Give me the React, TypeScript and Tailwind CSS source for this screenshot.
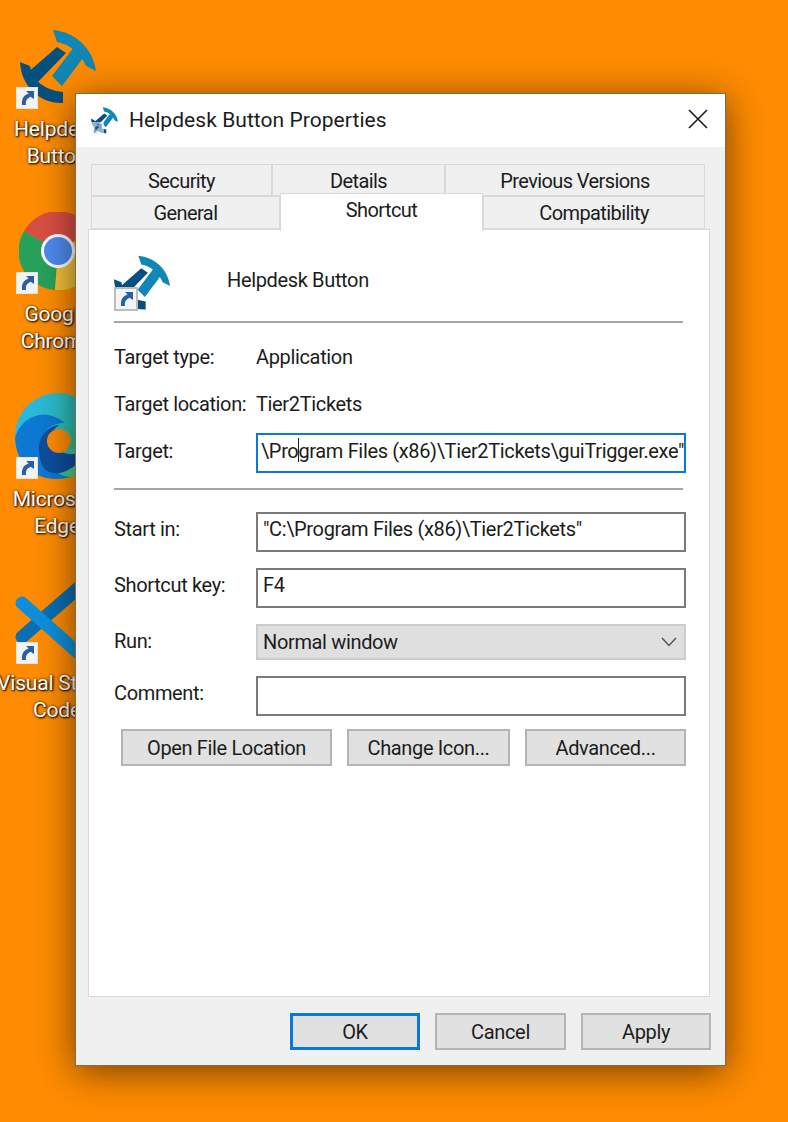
import { type ReactNode } from 'react'

function HelpdeskLogo({ className }: { className: string }) {
  return (
    <svg viewBox="0 0 76 74" className={className}>
      <path d="M33 0C55 2 73 18 76 41L66 36C62 25 50 14 37 12Z" fill="#1286b4" />
      <path d="M54 17L63 28L42 56L32 46Z" fill="#1286b4" />
      <path d="M37 17L46 23L16 54L6 44Z" fill="#06507f" />
      <path d="M0 32L10 36C12 50 24 60 43 62L43 73C20 74 1 56 0 32Z" fill="#06507f" />
    </svg>
  )
}

function ShortcutBadge({ className }: { className: string }) {
  return (
    <div className={`absolute flex items-center justify-center bg-[#f4f4f4] ${className}`}>
      <svg viewBox="0 0 16 16" className="size-[80%]">
        <path d="M15 1H7l2.6 2.6C5 5 2.5 8.5 3 15h4c-.5-4 .6-6.6 4.6-8.3L15 9Z" fill="#2a5fa8" />
      </svg>
    </div>
  )
}

function ChromeIcon() {
  return (
    <svg viewBox="0 0 78 78" className="size-[78px]">
      <path d="M39 39L5 19A39 39 0 0 1 73 19Z" fill="#db4f43" />
      <path d="M39 39L5 19A39 39 0 0 0 36 78Z" fill="#27a25b" />
      <path d="M39 39L73 19A39 39 0 0 1 36 78Z" fill="#f2c13c" />
      <circle cx="39" cy="39" r="17" fill="#fff" />
      <circle cx="39" cy="39" r="14" fill="#4f8bf0" />
    </svg>
  )
}

function EdgeIcon() {
  return (
    <svg viewBox="0 0 86 86" className="size-[86px]">
      <defs>
        <linearGradient id="edgeTop" x1="0" y1="0" x2="1" y2="0.4">
          <stop offset="0" stopColor="#2ab6ef" />
          <stop offset="0.7" stopColor="#2cc0b4" />
          <stop offset="1" stopColor="#5fd66e" />
        </linearGradient>
      </defs>
      <circle cx="43" cy="43" r="43" fill="url(#edgeTop)" />
      <path d="M0 46C4 26 28 12 50 30C34 30 24 40 28 56C31 72 44 84 56 84C24 92 2 74 0 46Z" fill="#0c79d4" />
      <path d="M24 56C24 40 36 32 44 32C36 38 34 46 40 54C46 62 58 62 70 60C60 78 40 86 30 76C26 72 24 64 24 56Z" fill="#0d4f9e" />
      <circle cx="44" cy="48" r="12" fill="#ff8c00" />
      <path d="M50 34C58 38 60 48 52 56L70 56C72 46 62 34 50 34Z" fill="#2cc0a0" />
    </svg>
  )
}

function VsCodeIcon() {
  return (
    <svg viewBox="0 0 86 86" className="size-[86px]">
      <path d="M8 57L70 3" stroke="#0a6fb3" strokeWidth="13" strokeLinecap="round" />
      <path d="M8 23L70 78" stroke="#0f8fdb" strokeWidth="13" strokeLinecap="round" />
    </svg>
  )
}

const desktopItems = [
  { lines: ['Helpdesk', 'Button'], icon: <HelpdeskLogo className="h-[74px] w-[76px]" />, iconPos: 'left-[20px] top-[30px]', badge: 'top-[87px]', label: 'top-[116px]' },
  { lines: ['Google', 'Chrome'], icon: <ChromeIcon />, iconPos: 'left-[19px] top-[212px]', badge: 'top-[272px]', label: 'top-[301px]' },
  { lines: ['Microsoft', 'Edge'], icon: <EdgeIcon />, iconPos: 'left-[15px] top-[393px]', badge: 'top-[457px]', label: 'top-[486px]' },
  { lines: ['Visual Studio', 'Code'], icon: <VsCodeIcon />, iconPos: 'left-[14px] top-[580px]', badge: 'top-[642px]', label: 'top-[670px]' },
]

function TabButton({ label, width, active }: { label: string; width: string; active?: boolean }) {
  return (
    <div
      className={
        active
          ? `relative z-10 -mb-[2px] -mt-[3px] flex h-[38px] items-center justify-center border border-b-0 border-[#d9d9d9] bg-white tracking-[-0.6px] ${width}`
          : `flex h-full items-center justify-center border border-[#d9d9d9] bg-[#f0f0f0] pt-[2px] tracking-[-0.6px] ${width}`
      }
    >
      <span className={active ? 'pb-[5px]' : ''}>{label}</span>
    </div>
  )
}

function Field({ label, children, className, labelPad }: { label: string; children: ReactNode; className?: string; labelPad?: string }) {
  return (
    <div className={`flex items-center ${className ?? ''}`}>
      <span className={`w-[142px] ${labelPad ?? 'pb-[6px]'}`}>{label}</span>
      {children}
    </div>
  )
}

function TextBox({ value, focused }: { value?: string; focused?: boolean }) {
  return (
    <div
      className={`flex h-[40px] w-[430px] items-center overflow-hidden whitespace-nowrap bg-white ${
        focused ? 'border-2 border-[#0a78d4] pb-1 pl-[3px]' : 'border-2 border-[#7a7a7a] pb-[6px] pl-[5px]'
      }`}
    >
      {value}
    </div>
  )
}

function PushButton({ label, width, isDefault }: { label: string; width: string; isDefault?: boolean }) {
  return (
    <div
      className={`flex h-[37px] items-center justify-center bg-[#e1e1e1] pt-[1px] ${width} ${
        isDefault ? 'border-[3px] border-[#0a78d4]' : 'border-2 border-[#b4b4b4]'
      }`}
    >
      {label}
    </div>
  )
}

export default function App() {
  return (
    <div className="relative h-[1122px] w-[788px] overflow-hidden bg-[#ff8c00] font-['Roboto','Liberation_Sans',sans-serif] text-[20px] leading-[27px] tracking-[-0.35px] text-[#1c1c1c]">
      {desktopItems.map((item) => (
        <div key={item.lines[0]}>
          <div className={`absolute ${item.iconPos}`}>{item.icon}</div>
          <ShortcutBadge className={`left-[16px] size-[22px] border border-[#e4e4e4] ${item.badge}`} />
          <div
            className={`absolute -left-[5px] w-[124px] text-center text-[21px] tracking-[-0.2px] text-white [text-shadow:1px_1px_2px_#000,0_0_3px_#4a2a00] ${item.label}`}
          >
            {item.lines.map((line) => (
              <div key={line}>{line}</div>
            ))}
          </div>
        </div>
      ))}

      <div className="absolute left-[75px] top-[93px] flex h-[973px] w-[651px] flex-col border border-[#7d6a4f] bg-[#f0f0f0] shadow-[0_6px_36px_rgba(0,0,0,0.55)]">
        <div className="flex h-[53px] shrink-0 items-center bg-white pl-[15px] pr-[17px]">
          <div className="relative mr-[11px] h-[29px] w-[27px]">
            <HelpdeskLogo className="h-[29px] w-[27px]" />
            <ShortcutBadge className="bottom-0 left-0 size-[13px] opacity-60" />
          </div>
          <span className="text-[21px] tracking-[0.05px]">Helpdesk Button Properties</span>
          <svg viewBox="0 0 20 20" className="-mt-1 ml-auto size-[20px]">
            <path d="M1 1L19 19M19 1L1 19" stroke="#1a1a1a" strokeWidth="1.6" />
          </svg>
        </div>

        <div className="flex flex-1 flex-col px-[12px] pt-[17px]">
          <div className="flex h-[32px] shrink-0 pl-[3px]">
            <TabButton label="Security" width="w-[181px]" />
            <TabButton label="Details" width="w-[173px]" />
            <TabButton label="Previous Versions" width="w-[260px]" />
          </div>
          <div className="flex h-[33px] shrink-0 pl-[3px]">
            <TabButton label="General" width="w-[189px]" />
            <TabButton label="Shortcut" width="w-[203px]" active />
            <TabButton label="Compatibility" width="w-[222px]" />
          </div>

          <div className="flex h-[768px] w-[622px] shrink-0 flex-col border border-[#d9d9d9] bg-white pl-[25px]">
            <div className="mt-[25px] flex h-[56px] shrink-0 items-center">
              <div className="relative h-[56px] w-[56px]">
                <HelpdeskLogo className="h-[56px] w-[56px]" />
                <ShortcutBadge className="bottom-0 left-0 size-[24px] border-2 border-[#bdbdbd]" />
              </div>
              <span className="ml-[57px] pb-[6px]">Helpdesk Button</span>
            </div>
            <div className="mt-[10px] h-[2px] w-[569px] bg-[#a6a6a6]" />

            <Field label="Target type:" labelPad="pb-0" className="mt-[19px] h-[30px]">
              Application
            </Field>
            <Field label="Target location:" labelPad="pb-0" className="mt-[17px] h-[30px]">
              Tier2Tickets
            </Field>
            <div className="relative mt-[14px]">
              <Field label="Target:" labelPad="pb-1">
                <TextBox focused value={'\\Program Files (x86)\\Tier2Tickets\\guiTrigger.exe"'} />
              </Field>
              <div className="absolute left-[184px] top-[5px] h-[24px] w-px bg-[#1c1c1c]" />
            </div>

            <div className="mt-[15px] h-[2px] w-[569px] bg-[#a6a6a6]" />

            <Field label="Start in:" className="mt-[22px]">
              <TextBox value={'"C:\\Program Files (x86)\\Tier2Tickets"'} />
            </Field>
            <Field label="Shortcut key:" className="mt-[16px]">
              <TextBox value="F4" />
            </Field>
            <Field label="Run:" labelPad="pb-[2px]" className="mt-[16px]">
              <div className="flex h-[36px] w-[430px] items-center justify-between border-2 border-[#cccccc] bg-[#dfdfdf] pl-[5px] pr-[7px]">
                Normal window
                <svg viewBox="0 0 16 10" className="h-[10px] w-[16px]">
                  <path d="M1 1L8 8.5L15 1" fill="none" stroke="#555" strokeWidth="1.5" />
                </svg>
              </div>
            </Field>
            <Field label="Comment:" className="mt-[16px]">
              <TextBox />
            </Field>

            <div className="mt-[13px] flex w-[572px] justify-end gap-[15px]">
              <PushButton label="Open File Location" width="w-[211px]" />
              <PushButton label="Change Icon..." width="w-[163px]" />
              <PushButton label="Advanced..." width="w-[161px]" />
            </div>
          </div>

          <div className="mt-[16px] flex justify-end gap-[15px] pr-[2px]">
            <PushButton label="OK" width="w-[130px]" isDefault />
            <PushButton label="Cancel" width="w-[131px]" />
            <PushButton label="Apply" width="w-[130px]" />
          </div>
        </div>
      </div>
    </div>
  )
}
